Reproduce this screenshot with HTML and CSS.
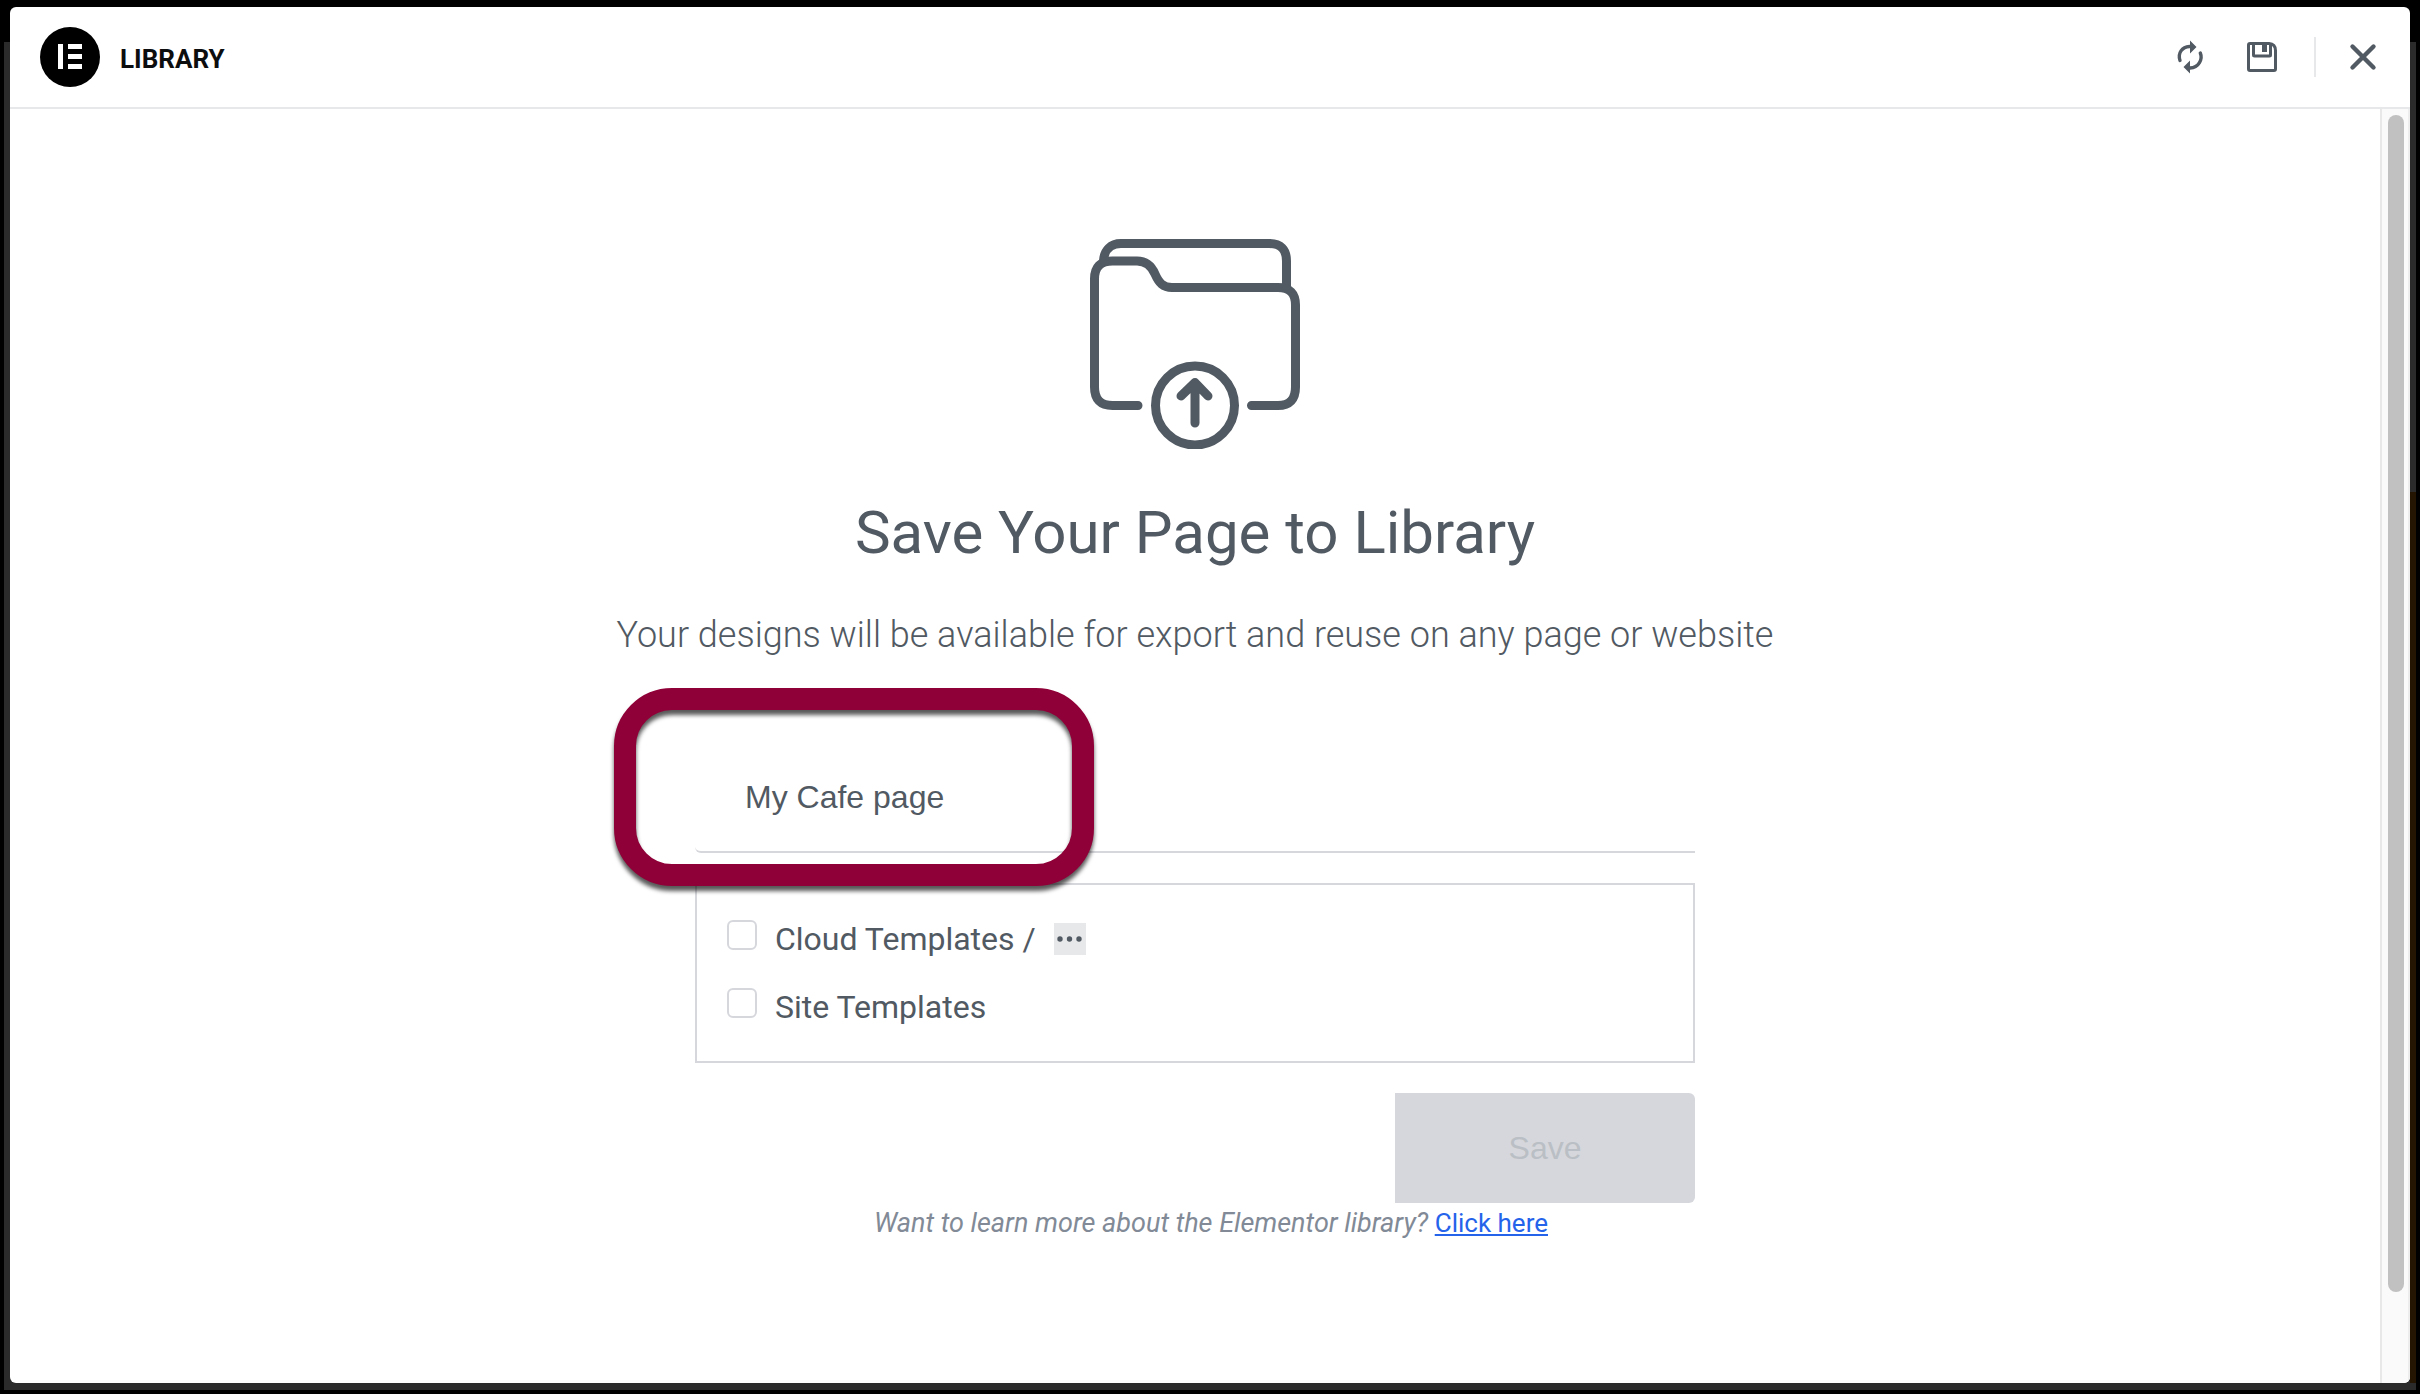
FILE: index.html
```html
<!DOCTYPE html>
<html lang="en">
<head>
  <meta charset="UTF-8">
  <meta name="viewport" content="width=device-width, initial-scale=1">
  <title>Library</title>
  <link rel="stylesheet" href="styles.css">
</head>
<body>

  <div class="editor">
    <div class="modal" role="dialog" aria-labelledby="libraryTitle">

      <!-- Header -->
      <header class="modal-header">
        <svg class="logo" viewBox="0 0 60 60" aria-hidden="true">
          <circle cx="30" cy="30" r="30" fill="#000"/>
          <path fill="#fff" d="M18 17h5v25h-5zM28 17h14v5H28zM28 27h14v5H28zM28 37h14v5H28z"/>
        </svg>
        <h1 id="libraryTitle">LIBRARY</h1>
        <div class="actions">
          <button type="button" class="icon-btn" aria-label="Sync library">
            <svg viewBox="0 0 34 34">
              <path d="M7 20.500C4.500 13 9 7 16.500 6.500M27.300 13C29.800 19 26 27.500 17 28" fill="none" stroke="#515962" stroke-width="3.400" stroke-linecap="round"/>
              <path d="M17 0.500l6.500 6.500L17 13.500zM17 20.500v13L10.500 27z" fill="#515962"/>
            </svg>
          </button>
          <button type="button" class="icon-btn" aria-label="Save to library">
            <svg viewBox="0 0 34 34" fill="none" stroke="#515962" stroke-width="3">
              <path d="M5 3.500h19q6.500 0.500 6.500 7V29q0 1.500-1.500 1.500H5q-1.500 0-1.500-1.500V5q0-1.500 1.500-1.500z"/>
              <path d="M8.500 3.500V15q0 1 1 1h15q1 0 1-1V5"/>
              <path d="M19.500 4v8" stroke-width="5"/>
            </svg>
          </button>
          <span class="divider"></span>
          <button type="button" class="icon-btn close" aria-label="Close">
            <svg viewBox="0 0 34 34">
              <path d="M6.500 6.500l21 21M27.500 6.500l-21 21" fill="none" stroke="#515962" stroke-width="4.400" stroke-linecap="round"/>
            </svg>
          </button>
        </div>
      </header>

      <div class="modal-body">
        <main class="content">
          <svg class="folder" viewBox="0 0 210 210" fill="none" stroke="#515962" stroke-width="9" stroke-linecap="round" aria-hidden="true">
            <path stroke-linecap="butt" d="M13.500 22C14 11 21 4.500 31 4.500H179Q196.500 4.500 196.500 22V49"/>
            <path d="M48 166.500H22.500Q4.500 166.500 4.500 148V40Q4.500 22 22.500 22H47C57 22 62 28 65 35C69 44 73 48.500 82 48.500H188Q205.500 48.500 205.500 66V148Q205.500 166.500 188 166.500H161.500"/>
            <circle cx="105" cy="166.500" r="39.500"/>
            <path stroke-linejoin="round" d="M105 184V144M91 157l14-13.500l13 13.500"/>
          </svg>

          <h2>Save Your Page to Library</h2>
          <p class="subtitle">Your designs will be available for export and reuse on any page or website</p>

          <!-- Save form -->
          <form class="save-form">
            <div class="name-field">
              <input type="text" name="title" value="My Cafe page" aria-label="Template name">
              <span class="highlight"></span>
            </div>

            <div class="sources">
              <div class="source">
                <input type="checkbox" id="cloud" name="source" value="cloud">
                <label for="cloud">Cloud Templates /</label>
                <button type="button" class="more" aria-label="Choose folder">
                  <svg viewBox="0 0 32 32" fill="#515962">
                    <circle cx="6" cy="16" r="2.700"/>
                    <circle cx="15.500" cy="16" r="2.700"/>
                    <circle cx="25" cy="16" r="2.700"/>
                  </svg>
                </button>
              </div>
              <div class="source">
                <input type="checkbox" id="site" name="source" value="local">
                <label for="site">Site Templates</label>
              </div>
            </div>

            <button type="submit" class="save-btn" disabled>Save</button>
          </form>

          <p class="help"><em>Want to learn more about the Elementor library?</em> <a href="#">Click here</a></p>
        </main>

        <div class="scrollbar"><div class="thumb"></div></div>
      </div>

    </div>
  </div>

</body>
</html>
```
FILE: styles.css
```css
* {
  box-sizing: border-box;
}

body {
  margin: 0;
  background-color: #000;
  color: #515962;
  font-family: Roboto, Arial, sans-serif;
}

h1, h2, p {
  margin: 0;
}

button {
  padding: 0;
  border: none;
  background: none;
}

/* Dimmed editor behind the modal */
.editor {
  display: flex;
  min-height: 100vh;
  padding: 3px 6px 7px;
  border: 4px solid #000;
  background:
    linear-gradient(transparent 488px, #241503 488px) right top / 6px calc(100% - 7px) no-repeat,
    linear-gradient(#000 38px, #2b2b2b 38px);
}

.modal {
  flex: 1;
  display: flex;
  flex-direction: column;
  border-radius: 6px;
  background-color: #fff;
  overflow: hidden;
}

/* Header */
.modal-header {
  display: flex;
  align-items: center;
  height: 102px;
  padding: 0 30px;
  border-bottom: 2px solid #e6e8ea;
}

.logo {
  width: 60px;
  height: 60px;
}

.modal-header h1 {
  margin-left: 20px;
  padding-top: 4px;
  color: #0c0d0e;
  font-size: 26px;
  line-height: 30px;
  font-weight: 700;
}

.actions {
  display: flex;
  align-items: center;
  margin-left: auto;
}

.icon-btn {
  width: 34px;
  height: 34px;
  margin-left: 38px;
  cursor: pointer;
}

.icon-btn svg,
.more svg {
  display: block;
  width: 100%;
}

.icon-btn.close {
  margin-left: 30px;
}

.divider {
  width: 2px;
  height: 40px;
  margin-left: 35px;
  background-color: #e6e8ea;
}

/* Body */
.modal-body {
  flex: 1;
  display: flex;
}

.content {
  flex: 1;
  display: flex;
  flex-direction: column;
  align-items: center;
  padding: 130px 20px 60px;
}

.folder {
  width: 210px;
  height: 210px;
}

.content h2 {
  margin-top: 54px;
  font-size: 60px;
  line-height: 60px;
  font-weight: 400;
}

.subtitle {
  margin-top: 50px;
  font-size: 36px;
  line-height: 44px;
  font-weight: 300;
}

.save-form {
  display: flex;
  flex-direction: column;
  width: 100%;
  max-width: 1000px;
  margin-top: 86px;
}

.name-field {
  position: relative;
}

.name-field input {
  display: block;
  width: 100%;
  height: 110px;
  padding: 0 50px;
  border: none;
  border-bottom: 2px solid #d6d7dc;
  border-radius: 6px 0 0 6px;
  background: none;
  color: #515962;
  font-family: Arial, sans-serif;
  font-size: 32px;
  outline: none;
}

/* Ring drawn over the name field */
.highlight {
  position: absolute;
  top: -55px;
  left: -81px;
  width: 480px;
  height: 198px;
  border: 22px solid #900038;
  border-radius: 58px;
  filter: drop-shadow(0 5px 2px rgba(0, 0, 0, 0.65));
  pointer-events: none;
}

.sources {
  height: 180px;
  margin-top: 30px;
  padding: 20px 30px;
  border: 2px solid #d6d7dc;
}

.source {
  display: flex;
  align-items: center;
  height: 68px;
  font-size: 32px;
}

.source input {
  appearance: none;
  width: 30px;
  height: 30px;
  margin: 0 18px 8px 0;
  border: 2px solid #d6d7dc;
  border-radius: 6px;
  background-color: #fff;
}

.source input:checked {
  background-color: #515962;
}

.more {
  width: 32px;
  height: 32px;
  margin-left: 18px;
  background-color: #e6e8ea;
}

.save-btn {
  align-self: flex-end;
  width: 300px;
  height: 110px;
  margin-top: 30px;
  border-radius: 0 6px 6px 0;
  background-color: #d6d7dc;
  color: #babfc5;
  font-family: Arial, sans-serif;
  font-size: 32px;
}

.help {
  margin-top: 4px;
  margin-left: 32px;
  color: #818a96;
  font-size: 26px;
  line-height: 32px;
}

.help em {
  font-size: 27px;
}

.help a {
  color: #2563eb;
}

/* Scrollbar */
.scrollbar {
  width: 30px;
  padding: 6px 4px 6px 6px;
  border-left: 2px solid #e8e8e8;
  border-right: 2px solid #ededed;
  background-color: #fafafa;
}

.thumb {
  width: 16px;
  height: calc(100% - 85px);
  border-radius: 8px;
  background-color: #c1c1c1;
}
```
